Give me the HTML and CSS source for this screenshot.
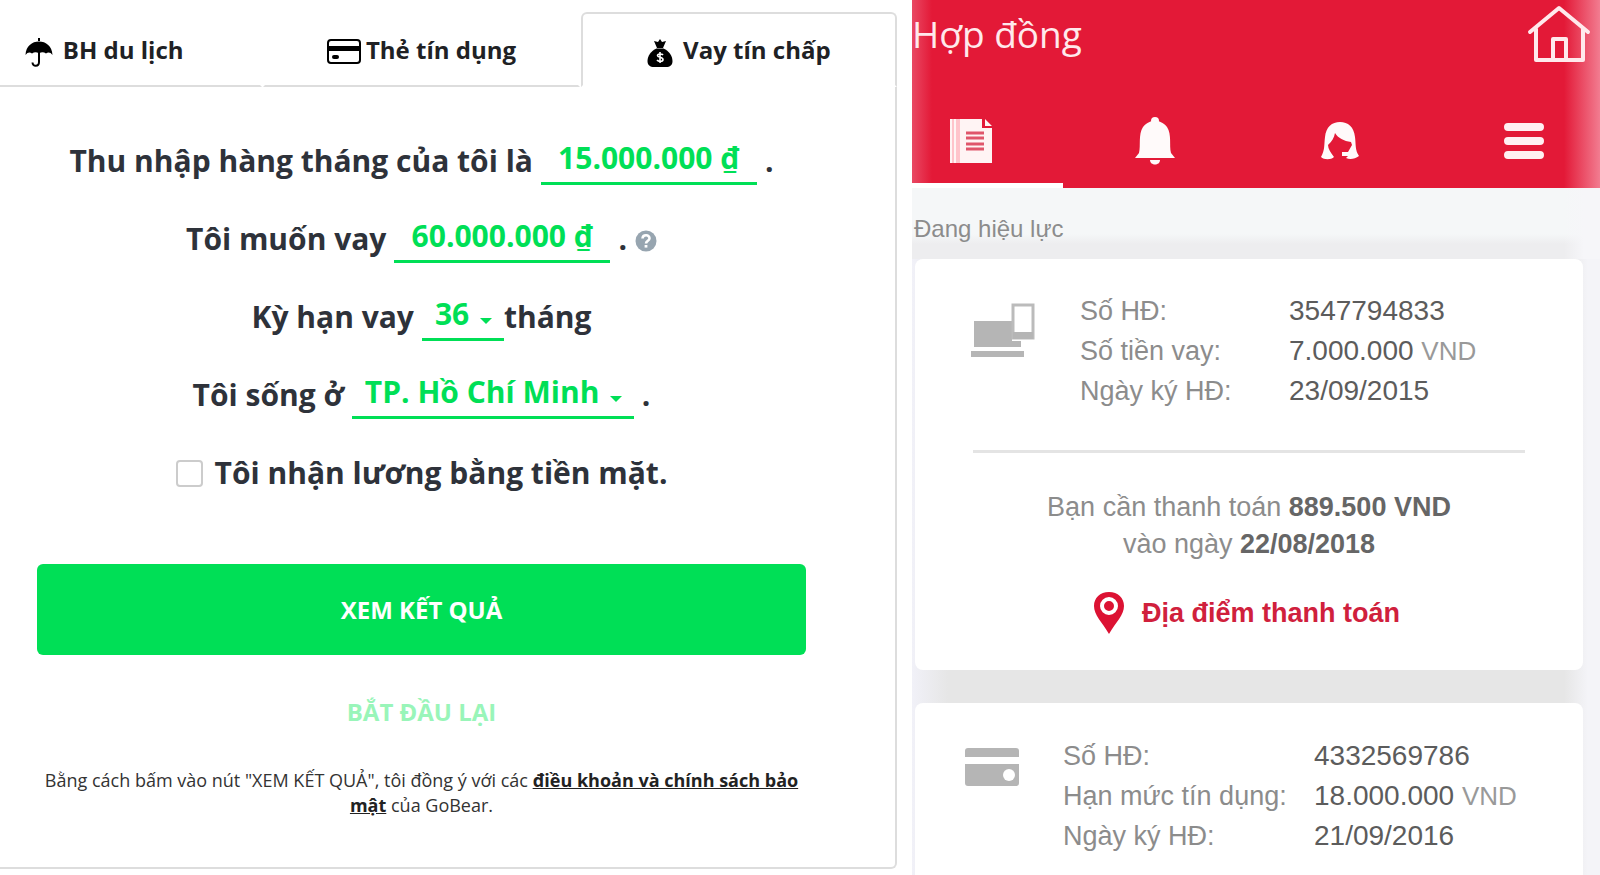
FILE: index.html
```html
<!DOCTYPE html>
<html lang="vi">
<head>
<meta charset="utf-8">
<meta name="viewport" content="width=device-width, initial-scale=1">
<title>Vay tín chấp</title>
<link rel="stylesheet" href="styles.css">
</head>
<body>
<main class="finder">
  <nav class="tabs">
    <a class="tab" href="#travel">
      <svg viewBox="0 0 28 30" width="28" height="30" aria-hidden="true"><path d="M14 1v3" stroke="#000" stroke-width="2" fill="none"/><path d="M0.500 18C1 9 7 4.500 14 4.500S27 9 27.500 18Q24.500 14 21 16.500Q17.500 14 14 16.500Q10.500 14 7 16.500Q3.500 14 0.500 18z"/><path d="M14 16v9c0 5-6.500 5-6.500 0.500" stroke="#000" stroke-width="2" fill="none"/></svg>
      <span>BH du lịch</span>
    </a>
    <a class="tab tab-card" href="#card">
      <svg viewBox="0 0 34 26" width="34" height="26" aria-hidden="true"><rect x="1" y="2" width="32" height="23" rx="3" fill="#fff" stroke="#000" stroke-width="2"/><path d="M1 8h32v5H1z"/><rect x="5" y="17" width="7" height="4" rx="2"/></svg>
      <span>Thẻ tín dụng</span>
    </a>
    <a class="tab tab-active" href="#loan" aria-current="page">
      <svg viewBox="0 0 26 30" width="26" height="30" aria-hidden="true"><path d="M7 4l4 1 2-3 2 3 4-1-3 7h-6z"/><path d="M9.500 11.500h7C22 14 25.500 19 25.500 24c0 4-2.500 6-6.500 6H7c-4 0-6.500-2-6.500-6C.5 19 4 14 9.500 11.500z"/><path d="M16 18c-1-1.500-5.500-1.500-5.500.5s5.500 1.500 5.500 4-4.500 2.500-6 .5M13 15v11" fill="none" stroke="#fff" stroke-width="1.600"/></svg>
      <span>Vay tín chấp</span>
    </a>
  </nav>

  <form class="loan-form">
    <div class="row">
      <label for="income">Thu nhập hàng tháng của tôi là</label>
      <input class="field money" id="income" type="text" value="15.000.000 ₫">
      <span>.</span>
    </div>
    <div class="row">
      <label for="amount">Tôi muốn vay</label>
      <input class="field money" id="amount" type="text" value="60.000.000 ₫">
      <span>.</span>
      <button class="help" type="button" aria-label="Trợ giúp">
        <svg viewBox="0 0 22 22" width="22" height="22" aria-hidden="true"><circle cx="11" cy="11" r="10.500" fill="#97a5b0"/><path d="M7.500 8.500c.3-4.500 7.300-4 7 0-.2 2.300-3.500 2.200-3.500 5" fill="none" stroke="#fff" stroke-width="2.600"/><path d="M9.600 15h2.800v2.600H9.600z" fill="#fff"/></svg>
      </button>
    </div>
    <div class="row">
      <label for="term">Kỳ hạn vay</label>
      <span class="pair">
        <span class="select"><select class="field" id="term"><option>36</option></select></span>
        <span>tháng</span>
      </span>
    </div>
    <div class="row">
      <label for="city">Tôi sống ở</label>
      <span class="select"><select class="field" id="city"><option>TP. Hồ Chí Minh</option></select></span>
      <span>.</span>
    </div>
    <div class="row row-check">
      <input class="check" id="cash" type="checkbox">
      <label for="cash">Tôi nhận lương bằng tiền mặt.</label>
    </div>
    <button class="submit" type="submit">XEM KẾT QUẢ</button>
    <button class="reset" type="reset">BẮT ĐẦU LẠI</button>
    <p class="legal">Bằng cách bấm vào nút "XEM KẾT QUẢ", tôi đồng ý với các <a href="#terms">điều khoản và chính sách bảo mật</a> của GoBear.</p>
  </form>
</main>

<aside class="app">
  <header class="app-header">
    <div class="app-title">
      <h1>Hợp đồng</h1>
      <a href="#home" aria-label="Trang chủ"><svg viewBox="0 0 62 58" width="62" height="58" aria-hidden="true"><path d="M2 27L31 3l29 24M8 24v31h47V24M25 55V34h13v21" fill="none" stroke="#ffe9ec" stroke-width="4" stroke-linecap="round" stroke-linejoin="round"/></svg></a>
    </div>
    <nav class="app-nav">
      <a class="app-tab app-tab-active" href="#contracts" aria-label="Hợp đồng"><svg viewBox="0 0 44 46" width="44" height="46" aria-hidden="true"><path fill="#ffc4cb" d="M1 1h10v44H1z"/><path fill="#fff4f4" d="M1 1h2v44H1zM5 1h2v44H5zM11 1h22v9h10v35H11zM36 1l7 7h-7z"/><path d="M17 15h18M17 20h18M17 26h18M17 31h18" stroke="#e0566b" stroke-width="3"/></svg></a>
      <a class="app-tab" href="#alerts" aria-label="Thông báo"><svg viewBox="0 0 40 48" width="40" height="48" aria-hidden="true"><g fill="#fffafa"><circle cx="20" cy="4" r="4"/><path d="M4 36c2-8-1-18 4-26 4-5 8-6 12-6s8 1 12 6c5 8 2 18 4 26l4 5H0z"/><path d="M15 43h10c0 6-10 6-10 0z"/></g></svg></a>
      <a class="app-tab" href="#support" aria-label="Hỗ trợ"><svg viewBox="0 0 38 38" width="38" height="38" aria-hidden="true"><path fill="#fffafa" d="M0 35c4-7 3-12 4-20C5 5 11 0 19 0s14 5 15 15c1 8 0 13 4 19-4 3-9 4-13 2l2-2h-6v-4h6l4-7-1-3C23 19 17 16 14 11c-1 5-3 8-7 12 0 4 3 8 6 12-3 3-10 3-13 0z"/></svg></a>
      <a class="app-tab" href="#menu" aria-label="Menu"><svg viewBox="0 0 40 38" width="40" height="38" aria-hidden="true"><path d="M4 5h32M4 19h32M4 33h32" stroke="#fff0f2" stroke-width="8" stroke-linecap="round"/></svg></a>
    </nav>
  </header>

  <h2 class="status">Đang hiệu lực</h2>

  <section class="contract">
    <div class="summary">
      <svg viewBox="2 0 64 56" width="64" height="56" aria-hidden="true"><path fill="#b5b5b5" d="M3 18h38v20h9v6H3zM0 48h53v6H0z"/><rect x="42" y="2" width="20" height="33" fill="#fff" stroke="#bbb" stroke-width="3"/><path fill="#b5b5b5" d="M42 29h20v7H42z"/></svg>
      <dl class="facts">
        <dt>Số HĐ:</dt><dd>3547794833</dd>
        <dt>Số tiền vay:</dt><dd>7.000.000 <small>VND</small></dd>
        <dt>Ngày ký HĐ:</dt><dd>23/09/2015</dd>
      </dl>
    </div>
    <p class="due">Bạn cần thanh toán <strong>889.500 VND</strong><br>vào ngày <strong>22/08/2018</strong></p>
    <a class="place" href="#places">
      <svg viewBox="0 0 30 42" width="30" height="42" aria-hidden="true"><path fill="#dc1233" d="M15 0c9 0 15 6 15 14 0 9-8 16-15 28C8 30 0 23 0 14 0 6 6 0 15 0z"/><circle cx="15" cy="14" r="7" fill="#dc1233" stroke="#fff" stroke-width="4"/></svg>
      <span>Địa điểm thanh toán</span>
    </a>
  </section>

  <section class="contract contract-credit">
    <div class="summary">
      <svg viewBox="0 0 54 38" width="54" height="38" aria-hidden="true"><path fill="#b5b5b5" d="M0 9V3q0-3 3-3h48q3 0 3 3v6zM0 16h54v19q0 3-3 3H3q-3 0-3-3z"/><circle cx="44" cy="27" r="6" fill="#fff"/></svg>
      <dl class="facts">
        <dt>Số HĐ:</dt><dd>4332569786</dd>
        <dt>Hạn mức tín dụng:</dt><dd>18.000.000 <small>VND</small></dd>
        <dt>Ngày ký HĐ:</dt><dd>21/09/2016</dd>
      </dl>
    </div>
  </section>
</aside>
</body>
</html>
```
FILE: styles.css
```css
* {
  box-sizing: border-box;
}

body {
  display: grid;
  grid-template-columns: 57fr 43fr;
  min-height: 100vh;
  margin: 0;
  overflow: hidden;
  background: #fff;
  font-family: "Open Sans", "Noto Sans", sans-serif;
}

a {
  color: inherit;
  text-decoration: none;
}

svg {
  overflow: visible;
}

/* Loan finder */
.finder {
  display: flex;
  flex-direction: column;
  min-width: 0;
  margin-left: -54px;
  padding: 12px 15px 6px 0;
}

.tabs {
  display: grid;
  grid-template-columns: repeat(3, 1fr);
  column-gap: 1px;
}

.tab {
  display: flex;
  align-items: center;
  justify-content: center;
  gap: 10px;
  height: 75px;
  border: 2px solid transparent;
  border-bottom-color: #ddd;
  color: #202124;
  font-size: 24px;
  font-weight: 700;
  line-height: 32px;
}

.tab svg {
  margin-top: 5px;
}

.tab-card {
  gap: 5px;
}

.tab-card svg {
  margin-top: 2px;
}

.tab-active {
  border-color: #ddd;
  border-bottom-color: transparent;
  border-radius: 6px 6px 0 0;
}

.loan-form {
  display: flex;
  flex: 1;
  flex-direction: column;
  padding: 35px 89px 0;
  border: 2px solid #ddd;
  border-top: 0;
  border-radius: 0 0 6px 6px;
  color: #2e323a;
}

.row {
  display: flex;
  align-items: center;
  justify-content: center;
  gap: 8px;
  height: 78px;
  font-size: 30px;
  font-weight: 700;
  line-height: 42px;
}

.row-check {
  gap: 12px;
}

.pair {
  display: flex;
  align-items: center;
}

.field {
  height: 48px;
  padding: 0 0 4px;
  border: 0;
  border-bottom: 3px solid #00df56;
  border-radius: 0;
  outline: 0;
  background: transparent;
  color: #00df56;
  font: inherit;
}

.money {
  width: 216px;
  text-align: center;
}

.select {
  position: relative;
  display: flex;
}

.select .field {
  padding-right: 34px;
  padding-left: 13px;
  appearance: none;
}

.select::after {
  position: absolute;
  top: 25px;
  right: 12px;
  border: 6px solid transparent;
  border-top-color: #00df56;
  content: "";
  pointer-events: none;
}

.help {
  display: flex;
  padding: 4px 0 0;
  border: 0;
  background: none;
}

.check {
  width: 27px;
  height: 27px;
  margin: 0;
  border: 2px solid #ccc;
  border-radius: 4px;
  appearance: none;
}

.submit,
.reset {
  border: 0;
  font: inherit;
  font-size: 24px;
  font-weight: 700;
  line-height: 32px;
}

.submit {
  height: 91px;
  margin-top: 52px;
  border-radius: 6px;
  background: #00df56;
  color: #fff;
}

.reset {
  align-self: center;
  margin-top: 41px;
  padding: 0;
  background: none;
  color: #99f5b9;
}

.legal {
  margin: 40px 0 0;
  color: #333;
  font-size: 18px;
  font-weight: 400;
  line-height: 25px;
  text-align: center;
}

.legal a {
  color: #222;
  font-weight: 700;
  text-decoration: underline;
}

/* Contract app */
.app {
  display: flex;
  flex-direction: column;
  min-width: 0;
  overflow: hidden;
  background: linear-gradient(90deg, #f1f1f8, #e6e6e6 36px, #e6e6e6 calc(100% - 36px), #f4f4f8 calc(100% - 12px));
  color: #8c8c8c;
  font-family: "Liberation Sans", Arial, sans-serif;
}

.app-header {
  background: linear-gradient(90deg, #e94863, #e31937 20px, #e31937 calc(100% - 36px), #f27c90);
  color: #ffe9ec;
}

.app-title {
  display: flex;
  align-items: flex-start;
  justify-content: space-between;
  height: 94px;
  padding: 5px 10px 0 0;
}

.app-title h1 {
  margin: 5px 0 0;
  font-family: "Open Sans", "Noto Sans", sans-serif;
  font-size: 37px;
  font-weight: 400;
  line-height: 48px;
}

.app-nav {
  display: grid;
  grid-template-columns: repeat(4, 1fr);
  margin: 0 -16px 0 -33px;
}

.app-tab {
  display: flex;
  align-items: center;
  justify-content: center;
  height: 94px;
  padding-top: 4px;
  border-bottom: 5px solid transparent;
}

.app-tab-active {
  border-bottom-color: #fff;
}

.status {
  margin: 0;
  padding: 26px 2px 16px;
  background:
    linear-gradient(90deg, transparent calc(100% - 36px), #f6f6f9 calc(100% - 16px)),
    linear-gradient(#f5f7f8 46px, #ededef 56px);
  font-size: 24px;
  font-weight: 400;
  line-height: 29px;
}

.contract {
  display: flex;
  flex-direction: column;
  align-items: center;
  margin: 0 17px 0 3px;
  padding: 32px 58px 36px;
  border-radius: 8px;
  background: #fff;
}

.summary {
  display: grid;
  grid-template-columns: 64px 1fr;
  column-gap: 43px;
  align-self: stretch;
  padding: 12px 0 39px;
  border-bottom: 3px solid #e4e4e4;
}

.facts {
  display: grid;
  grid-template-columns: 209px 1fr;
  margin: -12px 0 0;
  font-size: 27px;
  line-height: 40px;
}

.facts dd {
  margin: 0;
  color: #5c5c5c;
  font-size: 28px;
}

.facts small {
  color: #999;
  font-size: 26px;
}

.due {
  margin: 36px 0 0;
  font-size: 27px;
  line-height: 37px;
  text-align: center;
}

.due strong {
  color: #666;
}

.place {
  display: flex;
  align-items: center;
  gap: 18px;
  margin-top: 29px;
  padding-right: 4px;
  color: #d0203c;
  font-size: 27px;
  font-weight: 700;
  line-height: 38px;
}

.contract-credit {
  flex: 1;
  margin-top: 33px;
  padding: 33px 50px 0;
  border-radius: 8px 8px 0 0;
}

.contract-credit .summary {
  grid-template-columns: 54px 1fr;
  column-gap: 44px;
  padding-bottom: 0;
  border: 0;
}

.contract-credit .facts {
  grid-template-columns: 251px 1fr;
}
```
